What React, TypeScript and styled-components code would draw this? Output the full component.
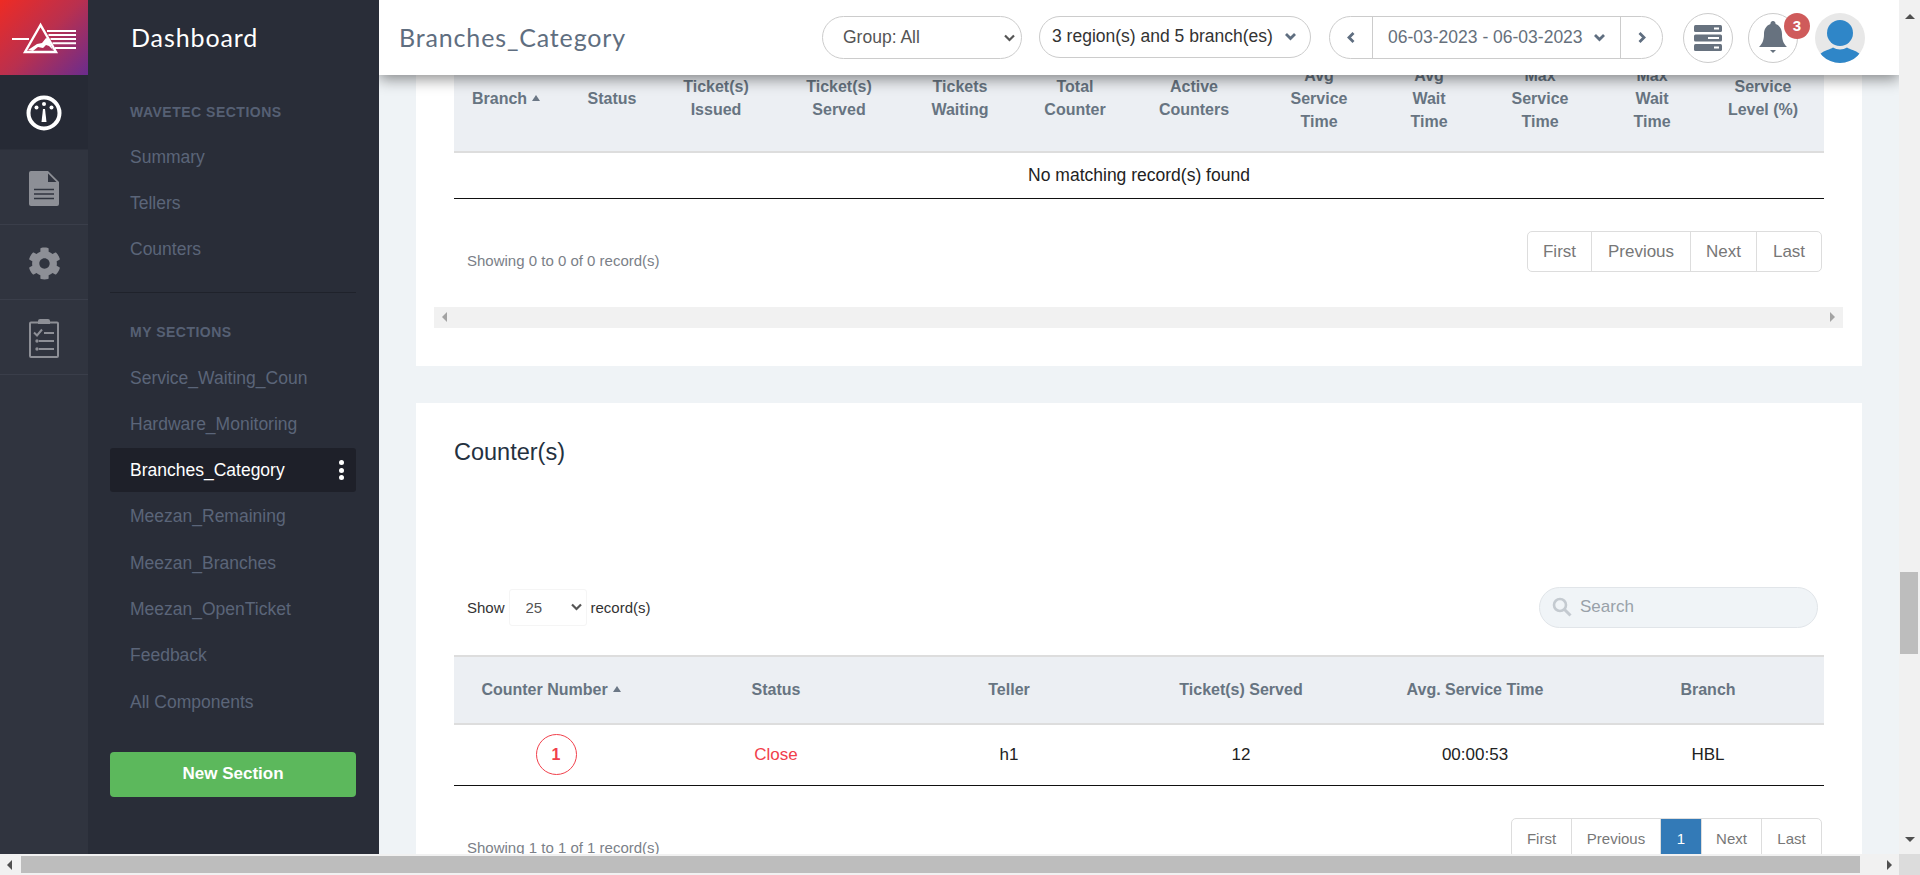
import * as React from 'react'
import styled, { createGlobalStyle } from 'styled-components'
import { FaCog } from 'react-icons/fa'

const GlobalStyle = createGlobalStyle`
  html, body {
    margin: 0;
    padding: 0;
    overflow: hidden;
    font-family: "Liberation Sans", Arial, sans-serif;
  }
  * { box-sizing: border-box; }
`

const Viewport = styled.div`
  width: 1920px;
  height: 875px;
  display: grid;
  grid-template-columns: 1899px 21px;
  grid-template-rows: 854px 21px;
  overflow: hidden;
  background: #f1f1f1;
`

const Page = styled.div`
  display: flex;
  min-width: 0;
  min-height: 0;
  overflow: hidden;
`

const Rail = styled.nav`
  width: 88px;
  flex: none;
  background: #30343f;
`

const Logo = styled.div`
  height: 75px;
  background: linear-gradient(135deg, #ee2b24 0%, #b9304f 50%, #6a2c8e 100%);
`

const RailItem = styled.div<{ $active?: boolean }>`
  height: 75px;
  padding-top: 2px;
  display: flex;
  align-items: center;
  justify-content: center;
  color: #8d8f96;
  background: ${props => (props.$active ? '#262a35' : 'transparent')};
  border-bottom: 1px solid ${props => (props.$active ? '#2b2f3a' : '#3a3e4a')};
`

const Sidebar = styled.aside`
  width: 291px;
  flex: none;
  background: #292d38;
  padding: 0 23px 0 22px;
`

const SideTitle = styled.div`
  font-family: Lato, "Open Sans", sans-serif;
  font-size: 25px;
  letter-spacing: 0.9px;
  color: #fff;
  height: 75px;
  line-height: 74px;
  padding-left: 21px;
`

const SectionLabel = styled.div`
  font-size: 14px;
  font-weight: bold;
  letter-spacing: 0.5px;
  color: #566074;
  height: 20px;
  line-height: 20px;
  padding-left: 20px;
  margin-top: 27px;
  margin-bottom: 12.5px;
`

const SideItem = styled.div<{ $active?: boolean }>`
  height: 44px;
  margin-bottom: 2.3px;
  line-height: 44px;
  padding: 0 12px 0 20px;
  border-radius: 3px;
  font-size: 17.5px;
  display: flex;
  align-items: center;
  justify-content: space-between;
  color: ${props => (props.$active ? '#fff' : '#5b6579')};
  background: ${props => (props.$active ? '#1e2029' : 'transparent')};
`

const SideDivider = styled.div`
  height: 1px;
  background: #1f222b;
  margin: 21px 0 29px;
  & + ${SectionLabel} {
    margin-top: 0;
    margin-bottom: 13.5px;
  }
`

const DotMenu = styled.span`
  display: flex;
  flex-direction: column;
  gap: 2.5px;
  i {
    width: 5px;
    height: 5px;
    border-radius: 50%;
    background: #fff;
  }
`

const NewSection = styled.button`
  display: block;
  width: 100%;
  height: 45px;
  margin-top: 28px;
  border: 0;
  border-radius: 4px;
  background: #5cb85c;
  color: #fff;
  font-family: inherit;
  font-size: 17px;
  font-weight: bold;
`

const Main = styled.main`
  position: relative;
  flex: 1;
  min-width: 0;
  overflow: hidden;
  background: #eff3f6;
  padding: 0 37px 0 37px;
`

const TopBar = styled.header`
  position: absolute;
  top: 0;
  left: 0;
  right: 0;
  height: 75px;
  z-index: 5;
  background: #fff;
  display: flex;
  align-items: center;
  padding: 0 34px 0 20px;
  box-shadow: 0 4px 14px rgba(0, 0, 0, 0.45);
`

const PageTitle = styled.div`
  font-family: Lato, "Open Sans", sans-serif;
  font-size: 25px;
  line-height: 28px;
  margin-top: -2px;
  letter-spacing: 0.85px;
  color: #5f6e80;
  flex: 1;
`

const SelectWrap = styled.div`
  position: relative;
  display: flex;
  svg {
    position: absolute;
    top: 50%;
    right: 6px;
    transform: translateY(-50%);
    pointer-events: none;
  }
`

const GroupSelect = styled.select`
  appearance: none;
  width: 200px;
  height: 43px;
  padding: 0 0 2px 20px;
  border: 1px solid #ccc;
  border-radius: 22px;
  background: #fff;
  color: #555;
  font-family: inherit;
  font-size: 17.5px;
  outline: none;
`

const RegionPicker = styled.div`
  width: 272px;
  height: 42px;
  margin-left: 17px;
  margin-top: -2px;
  padding: 0 13px 0 12px;
  border: 1px solid #ccc;
  border-radius: 21px;
  display: flex;
  align-items: center;
  justify-content: space-between;
  color: #333;
  font-size: 17.5px;
  white-space: nowrap;
`

const DatePicker = styled.div`
  width: 334px;
  height: 43px;
  margin-left: 18px;
  border: 1px solid #ccc;
  border-radius: 22px;
  display: grid;
  grid-template-columns: 42px 1fr 41px;
  align-items: stretch;
  color: #66707c;
  font-size: 17.5px;
  white-space: nowrap;
`

const DateArrow = styled.div`
  display: flex;
  align-items: center;
  justify-content: center;
`

const DateValue = styled.div`
  display: flex;
  align-items: center;
  justify-content: space-between;
  padding: 0 14px 0 15px;
  border-left: 1px solid #ccc;
  border-right: 1px solid #ccc;
`

const RoundButton = styled.div<{ $gap: number }>`
  position: relative;
  width: 50px;
  height: 50px;
  margin-left: ${props => props.$gap}px;
  border: 1px solid #ccc;
  border-radius: 50%;
  display: flex;
  align-items: center;
  justify-content: center;
`

const Badge = styled.span`
  position: absolute;
  top: -1px;
  right: -13px;
  width: 26px;
  height: 26px;
  border-radius: 50%;
  background: #cf5b5b;
  color: #fff;
  font-size: 15px;
  font-weight: bold;
  display: flex;
  align-items: center;
  justify-content: center;
`

const Avatar = styled.div`
  width: 50px;
  height: 50px;
  margin-left: 17px;
  border-radius: 50%;
  overflow: hidden;
  background: #e8e8e8;
`

const Card = styled.section<{ $first?: boolean }>`
  background: #fff;
  padding: ${props => (props.$first ? '45px 19px 38px 18px' : '34px 38px 0')};
  margin-bottom: 37px;
`

const Inner = styled.div`
  padding: 0 19px 0 20px;
`

const Table = styled.table`
  width: 100%;
  border-collapse: collapse;
  table-layout: fixed;
`

const Col = styled.col<{ $w: number }>`
  width: ${props => props.$w}px;
`

const Th = styled.th<{ $left?: boolean; $tall?: boolean }>`
  background: #eceff3;
  color: #677481;
  font-size: 16px;
  line-height: 23px;
  font-weight: bold;
  text-align: ${props => (props.$left ? 'left' : 'center')};
  padding: 0 ${props => (props.$left ? '0 0 18px' : '4px')};
  height: ${props => (props.$tall ? 107 : 68)}px;
  border-bottom: 2px solid #ddd;
`

const SortedTh = styled(Th)`
  padding-right: 14px;
`

const HeadRow = styled.tr<{ $ruled?: boolean }>`
  border-top: ${props => (props.$ruled ? '2px solid #ddd' : '0')};
`

const SortUp = styled.span`
  display: inline-block;
  width: 0;
  height: 0;
  margin-left: 5px;
  vertical-align: 3px;
  border-left: 4px solid transparent;
  border-right: 4px solid transparent;
  border-bottom: 6px solid #6b7785;
`

const Td = styled.td<{ $red?: boolean }>`
  height: 62px;
  text-align: center;
  color: ${props => (props.$red ? '#f1404b' : '#222')};
  font-size: 17px;
  border-bottom: 1px solid #111;
`

const EmptyCell = styled(Td)`
  height: 46px;
  font-size: 17.5px;
`

const CircleNumber = styled.span`
  display: inline-flex;
  width: 41px;
  height: 41px;
  border-radius: 50%;
  border: 1px solid #f1404b;
  color: #f1404b;
  font-size: 16px;
  font-weight: bold;
  align-items: center;
  justify-content: center;
`

const Footer = styled.div`
  display: flex;
  justify-content: space-between;
  align-items: flex-start;
  padding: 32px 2px 0 13px;
`

const Info = styled.div`
  margin-top: 20px;
  font-size: 15px;
  line-height: 20px;
  color: #7b7f88;
`

const Pager = styled.div`
  display: flex;
  border: 1px solid #ddd;
  border-radius: 5px;
  background: #fff;
`

const PageLink = styled.span<{ $small?: boolean; $active?: boolean; $w: number }>`
  width: ${props => props.$w}px;
  height: ${props => (props.$small ? 38 : 39)}px;
  padding-top: 1px;
  display: flex;
  align-items: center;
  justify-content: center;
  font-size: ${props => (props.$small ? 15 : 17)}px;
  color: ${props => (props.$active ? '#fff' : '#777')};
  background: ${props => (props.$active ? '#337ab7' : 'transparent')};
  & + & {
    border-left: 1px solid #ddd;
  }
`

const InnerScroll = styled.div`
  height: 21px;
  margin-top: 35px;
  background: #f1f1f1;
  display: flex;
  align-items: center;
  justify-content: space-between;
  padding: 0 8px;
`

const Arrow = styled.span<{ $dir: 'left' | 'right' | 'up' | 'down'; $color?: string }>`
  width: 0;
  height: 0;
  border-style: solid;
  border-color: transparent;
  border-width: 5px;
  ${props => `border-${{ left: 'right', right: 'left', up: 'bottom', down: 'top' }[props.$dir]}-color: ${props.$color || '#a3a3a3'};`}
  ${props => `border-${props.$dir}-width: 0;`}
`

const CardTitle = styled.h2`
  margin: 0;
  height: 30px;
  font-size: 23.5px;
  line-height: 30px;
  font-weight: normal;
  color: #24313f;
`

const ShowRow = styled.div`
  display: flex;
  align-items: center;
  margin-top: 120px;
  padding: 0 6px 0 13px;
  height: 41px;
  font-size: 15px;
  color: #333;
`

const LengthWrap = styled(SelectWrap)`
  margin: 0 4px;
  svg {
    right: 4px;
  }
`

const LengthSelect = styled.select`
  appearance: none;
  width: 78px;
  height: 37px;
  padding-left: 16px;
  border: 1px solid #f5f5f5;
  border-radius: 3px;
  background: #fff;
  color: #555;
  font-family: inherit;
  font-size: 15px;
  outline: none;
`

const SearchBox = styled.div`
  width: 279px;
  height: 41px;
  margin-left: auto;
  border: 1px solid #e1e5e9;
  border-radius: 21px;
  background: #f0f4f7;
  display: flex;
  align-items: center;
  gap: 8px;
  padding-left: 12px;
`

const SearchInput = styled.input`
  flex: 1;
  min-width: 0;
  border: 0;
  padding: 0;
  outline: none;
  background: transparent;
  font-family: inherit;
  font-size: 17px;
  &::placeholder {
    color: #99a1a9;
  }
`

const SecondTable = styled.div`
  margin-top: 27px;
`

const VScroll = styled.div`
  position: relative;
  background: #f1f1f1;
  display: flex;
  flex-direction: column;
  align-items: center;
  justify-content: space-between;
  padding: 9px 0 7px;
`

const VThumb = styled.div`
  position: absolute;
  top: 572px;
  left: 1px;
  width: 18px;
  height: 82px;
  background: #bdbdbd;
`

const HScroll = styled.div`
  position: relative;
  background: #f1f1f1;
  display: flex;
  align-items: center;
  justify-content: space-between;
  padding: 0 7px;
`

const HThumb = styled.div`
  position: absolute;
  top: 2px;
  left: 21px;
  width: 1839px;
  height: 17px;
  background: #bdbdbd;
`

const Corner = styled.div`
  background: #dcdcdc;
`

const Chevron = ({
  dir = 'down',
  color = '#5f6e80',
  size = 13,
  weight = 2.8,
}: {
  dir?: string
  color?: string
  size?: number
  weight?: number
}) => {
  const points: { [k: string]: string } = {
    down: '2,4 6.5,8.5 11,4',
    left: '8.5,2 4,6.5 8.5,11',
    right: '4.5,2 9,6.5 4.5,11',
  }
  return (
    <svg width={size} height={size} viewBox="0 0 13 13">
      <polyline points={points[dir]} fill="none" stroke={color} strokeWidth={weight} />
    </svg>
  )
}

const LogoMark = () => (
  <svg width="88" height="75" viewBox="0 0 88 75">
    <g stroke="#fff" fill="none">
      <path d="M12 39h17M47 31h29M48.500 35h27.500M50.500 39h25.500M52.500 43.300h23.500M55 48h21" strokeWidth="2" />
      <path d="M40.500 25 25 52h31z" strokeWidth="2.400" />
    </g>
    <path d="M28 50l9-6 5-1 4-5 3 1 1 4 3 7-4-4-3-1-3 3-5-1-5 4z" fill="#fff" />
  </svg>
)

const GaugeIcon = () => (
  <svg width="36" height="36" viewBox="0 0 36 36">
    <circle cx="18" cy="18" r="15.500" fill="none" stroke="#fff" strokeWidth="4" />
    <circle cx="10.500" cy="12.500" r="2" fill="#fff" />
    <circle cx="18" cy="9" r="2" fill="#fff" />
    <circle cx="25.500" cy="12.500" r="2" fill="#fff" />
    <path d="M17 14h2l1.500 13h-5z" fill="#fff" />
  </svg>
)

const DocIcon = () => (
  <svg width="30" height="35" viewBox="0 0 30 35">
    <path
      d="M2 0h17l11 11v22a2 2 0 0 1-2 2H2a2 2 0 0 1-2-2V2a2 2 0 0 1 2-2z"
      fill="#8d8f96"
    />
    <path d="M19 2.500V11h8.500z" fill="#30343f" />
    <path d="M5 18.500h20M5 23h20M5 27.500h20" stroke="#30343f" strokeWidth="1.500" />
  </svg>
)

const ClipboardIcon = () => (
  <svg width="30" height="40" viewBox="0 0 30 40">
    <rect x="1" y="4.500" width="28" height="34.500" rx="1" fill="none" stroke="#8d8f96" strokeWidth="2" />
    <path d="M9 6V3a2 2 0 0 1 2-2h8a2 2 0 0 1 2 2v3z" fill="#8d8f96" />
    <path d="M5 14.500l3 3 5-6" fill="none" stroke="#8d8f96" strokeWidth="2" />
    <path d="M15 15h10M10 23h15M10 31h15" stroke="#8d8f96" strokeWidth="2" />
    <circle cx="8" cy="23" r="1.700" fill="#8d8f96" />
    <circle cx="8" cy="31" r="1.700" fill="#8d8f96" />
  </svg>
)

const ServerIcon = () => (
  <svg width="28" height="28" viewBox="0 0 28 28">
    {[1, 10.5, 20].map(y => (
      <g key={y}>
        <rect x="0" y={y} width="28" height="7" rx="1.500" fill="#67727f" />
        <rect x={y === 10.5 ? 14 : 20} y={y + 2.5} width={y === 10.5 ? 11 : 5} height="2" fill="#fff" />
      </g>
    ))}
  </svg>
)

const BellIcon = () => (
  <svg width="28" height="34" viewBox="0 0 28 34">
    <path
      d="M14 0a2.500 2.500 0 0 1 2.500 3C21 4.500 23 8.500 23 13c0 6 1.500 9.500 5 13H0c3.500-3.500 5-7 5-13 0-4.500 2-8.500 6.500-10A2.500 2.500 0 0 1 14 0z"
      fill="#67727f"
    />
    <path d="M11 29h6l-3 3z" fill="#67727f" />
  </svg>
)

const PersonIcon = () => (
  <svg width="50" height="50" viewBox="0 0 50 50">
    <circle cx="25" cy="20" r="13" fill="#2f86c8" />
    <path d="M5 41c5-4 10-4.500 13-6.500 4 2.500 10 2.500 14 0 3 2 8 2.500 13 6.500a25 25 0 0 1-40 0z" fill="#2f86c8" />
  </svg>
)

const SearchIcon = () => (
  <svg width="20" height="20" viewBox="0 0 20 20">
    <circle cx="8" cy="8" r="6" fill="none" stroke="#c4cad0" strokeWidth="2.600" />
    <path d="M12.500 12.500l6 6" stroke="#c4cad0" strokeWidth="3" />
  </svg>
)

const wavetecSections = ['Summary', 'Tellers', 'Counters']
const mySections = [
  'Service_Waiting_Coun',
  'Hardware_Monitoring',
  'Branches_Category',
  'Meezan_Remaining',
  'Meezan_Branches',
  'Meezan_OpenTicket',
  'Feedback',
  'All Components',
]

const branchColumns: [string[], number][] = [
  [['Status'], 84],
  [['Ticket(s)', 'Issued'], 124],
  [['Ticket(s)', 'Served'], 122],
  [['Tickets', 'Waiting'], 120],
  [['Total', 'Counter'], 110],
  [['Active', 'Counters'], 128],
  [['Avg', 'Service', 'Time'], 122],
  [['Avg', 'Wait', 'Time'], 98],
  [['Max', 'Service', 'Time'], 124],
  [['Max', 'Wait', 'Time'], 100],
  [['Service', 'Level (%)'], 122],
]

const counterColumns: [string, number][] = [
  ['Status', 236],
  ['Teller', 230],
  ['Ticket(s) Served', 234],
  ['Avg. Service Time', 234],
  ['Branch', 232],
]

const App = () => (
  <Viewport>
    <GlobalStyle />
    <Page>
      <Rail>
        <Logo>
          <LogoMark />
        </Logo>
        <RailItem $active>
          <GaugeIcon />
        </RailItem>
        <RailItem>
          <DocIcon />
        </RailItem>
        <RailItem>
          <FaCog size={33} />
        </RailItem>
        <RailItem>
          <ClipboardIcon />
        </RailItem>
      </Rail>
      <Sidebar>
        <SideTitle>Dashboard</SideTitle>
        <SectionLabel>WAVETEC SECTIONS</SectionLabel>
        {wavetecSections.map(name => (
          <SideItem key={name}>{name}</SideItem>
        ))}
        <SideDivider />
        <SectionLabel>MY SECTIONS</SectionLabel>
        {mySections.map(name => (
          <SideItem key={name} $active={name === 'Branches_Category'}>
            {name}
            {name === 'Branches_Category' && (
              <DotMenu>
                <i />
                <i />
                <i />
              </DotMenu>
            )}
          </SideItem>
        ))}
        <NewSection>New Section</NewSection>
      </Sidebar>
      <Main>
        <TopBar>
          <PageTitle>Branches_Category</PageTitle>
          <SelectWrap>
            <GroupSelect defaultValue="all">
              <option value="all">Group: All</option>
            </GroupSelect>
            <Chevron color="#555" weight={2.2} />
          </SelectWrap>
          <RegionPicker>
            3 region(s) and 5 branch(es)
            <Chevron />
          </RegionPicker>
          <DatePicker>
            <DateArrow>
              <Chevron dir="left" />
            </DateArrow>
            <DateValue>
              06-03-2023 - 06-03-2023
              <Chevron />
            </DateValue>
            <DateArrow>
              <Chevron dir="right" />
            </DateArrow>
          </DatePicker>
          <RoundButton $gap={20}>
            <ServerIcon />
          </RoundButton>
          <RoundButton $gap={15}>
            <BellIcon />
            <Badge>3</Badge>
          </RoundButton>
          <Avatar>
            <PersonIcon />
          </Avatar>
        </TopBar>

        <Card $first>
          <Inner>
            <Table>
              <colgroup>
                <Col $w={116} />
                {branchColumns.map(([label, w]) => (
                  <Col key={label.join()} $w={w} />
                ))}
              </colgroup>
              <thead>
                <HeadRow>
                  <Th $left $tall>
                    Branch
                    <SortUp />
                  </Th>
                  {branchColumns.map(([label]) => (
                    <Th key={label.join()} $tall>
                      {label.map(line => (
                        <div key={line}>{line}</div>
                      ))}
                    </Th>
                  ))}
                </HeadRow>
              </thead>
              <tbody>
                <tr>
                  <EmptyCell colSpan={12}>No matching record(s) found</EmptyCell>
                </tr>
              </tbody>
            </Table>
            <Footer>
              <Info>Showing 0 to 0 of 0 record(s)</Info>
              <Pager>
                <PageLink $w={63}>First</PageLink>
                <PageLink $w={99}>Previous</PageLink>
                <PageLink $w={66}>Next</PageLink>
                <PageLink $w={65}>Last</PageLink>
              </Pager>
            </Footer>
          </Inner>
          <InnerScroll>
            <Arrow $dir="left" />
            <Arrow $dir="right" />
          </InnerScroll>
        </Card>

        <Card>
          <CardTitle>Counter(s)</CardTitle>
          <ShowRow>
            Show
            <LengthWrap>
              <LengthSelect defaultValue="25">
                <option value="25">25</option>
              </LengthSelect>
              <Chevron color="#555" weight={2.2} />
            </LengthWrap>
            record(s)
            <SearchBox>
              <SearchIcon />
              <SearchInput placeholder="Search" />
            </SearchBox>
          </ShowRow>
          <SecondTable>
            <Table>
              <colgroup>
                <Col $w={204} />
                {counterColumns.map(([label, w]) => (
                  <Col key={label} $w={w} />
                ))}
              </colgroup>
              <thead>
                <HeadRow $ruled>
                  <SortedTh>
                    Counter Number
                    <SortUp />
                  </SortedTh>
                  {counterColumns.map(([label]) => (
                    <Th key={label}>{label}</Th>
                  ))}
                </HeadRow>
              </thead>
              <tbody>
                <tr>
                  <Td>
                    <CircleNumber>1</CircleNumber>
                  </Td>
                  <Td $red>Close</Td>
                  <Td>h1</Td>
                  <Td>12</Td>
                  <Td>00:00:53</Td>
                  <Td>HBL</Td>
                </tr>
              </tbody>
            </Table>
          </SecondTable>
          <Footer>
            <Info>Showing 1 to 1 of 1 record(s)</Info>
            <Pager>
              <PageLink $small $w={59}>First</PageLink>
              <PageLink $small $w={89}>Previous</PageLink>
              <PageLink $small $active $w={41}>1</PageLink>
              <PageLink $small $w={60}>Next</PageLink>
              <PageLink $small $w={60}>Last</PageLink>
            </Pager>
          </Footer>
        </Card>
      </Main>
    </Page>
    <VScroll>
      <Arrow $dir="up" $color="#505050" />
      <VThumb />
      <Arrow $dir="down" $color="#505050" />
    </VScroll>
    <HScroll>
      <Arrow $dir="left" $color="#505050" />
      <HThumb />
      <Arrow $dir="right" $color="#505050" />
    </HScroll>
    <Corner />
  </Viewport>
)

export default App
